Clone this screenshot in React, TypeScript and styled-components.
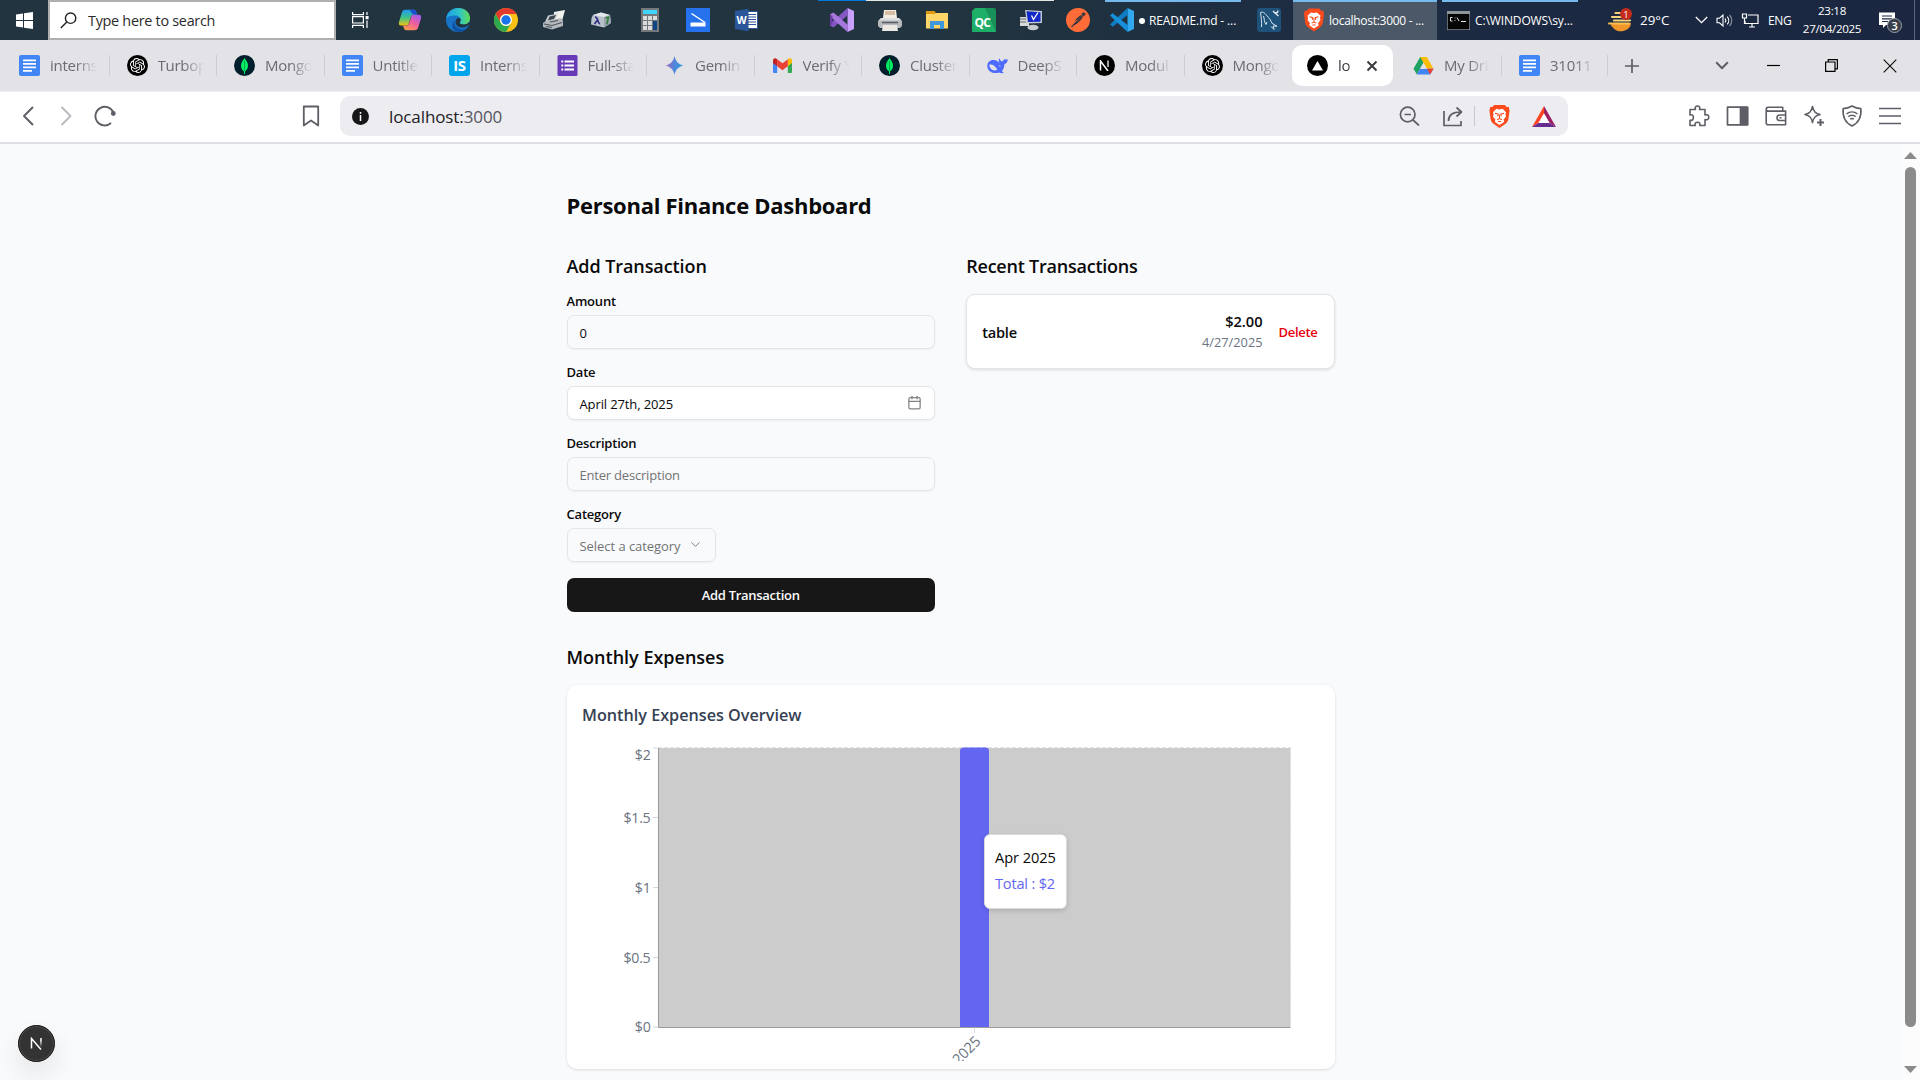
import React from "react";
import styled, { createGlobalStyle } from "styled-components";
import { SiOpenai, SiPostman } from "react-icons/si";
import { Calendar, ChevronDown } from "lucide-react";

const Global = createGlobalStyle`
  *, *::before, *::after { box-sizing: border-box; }
  html, body { margin: 0; padding: 0; }
  body { font-family: "Open Sans", "Noto Sans", sans-serif; background: #f9fafc; overflow: hidden; }
  svg { display: block; flex: none; }
`;

const Screen = styled.div`
  width: 1920px;
  height: 1080px;
  display: flex;
  flex-direction: column;
  overflow: hidden;
`;

/* ---------- Windows taskbar ---------- */

const Taskbar = styled.div`
  height: 40px;
  flex: none;
  display: flex;
  background: linear-gradient(90deg, #21343f 0%, #21343f 50%, #1c2a42 72%, #1b2741 100%);
  color: #fff;
  font-size: 12px;
`;
const StartButton = styled.div`
  width: 48px;
  display: flex;
  align-items: center;
  justify-content: center;
`;
const SearchBox = styled.div`
  width: 288px;
  display: flex;
  align-items: center;
  gap: 11px;
  padding-left: 10px;
  background: #fff;
  border: 2px solid #b0b0b0;
  color: #2b2b2b;
  font-size: 14.4px;
  letter-spacing: -0.28px;
`;
const PinnedApp = styled.div<{ $w?: number; $line?: string }>`
  width: ${(p) => p.$w ?? 48}px;
  display: flex;
  align-items: center;
  justify-content: center;
  background: ${(p) => (p.$line ? `linear-gradient(${p.$line}, ${p.$line}) top / 100% 1px no-repeat` : "none")};
`;
const RunningApp = styled(PinnedApp)`
  padding-left: 4px;
`;
const WindowButton = styled.div<{ $active?: boolean; $w: number; $gap: number; $spacing: number }>`
  width: ${(p) => p.$w}px;
  margin-left: ${(p) => p.$gap}px;
  padding: 0 0 2px ${(p) => (p.$active ? 11 : 5)}px;
  display: flex;
  align-items: center;
  gap: 5px;
  border-top: 2px solid #76b9ed;
  background: ${(p) => (p.$active ? "#4b5867" : "transparent")};
  letter-spacing: ${(p) => p.$spacing}px;
  white-space: nowrap;
`;
const Dot = styled.span`
  display: inline-block;
  width: 6px;
  height: 6px;
  margin-right: 4px;
  vertical-align: 1px;
  border-radius: 50%;
  background: #fff;
`;
const Tray = styled.div`
  flex: 1;
  display: flex;
  align-items: center;
  padding-left: 30px;
`;
const Temperature = styled.span`
  width: 55px;
  margin-left: 8px;
  font-size: 13.4px;
`;
const TrayIcons = styled.div`
  display: flex;
  align-items: center;
  gap: 8px;
`;
const Language = styled.span`
  width: 31px;
  margin-left: 9px;
  letter-spacing: -0.3px;
`;
const Clock = styled.div`
  width: 66px;
  display: flex;
  flex-direction: column;
  text-align: center;
  font-size: 11.6px;
  line-height: 18px;
  letter-spacing: -0.32px;
`;
const Notifications = styled.div`
  width: 36px;
  height: 40px;
  margin-left: 14px;
  border-right: 1px solid #5a6577;
  display: flex;
  align-items: center;
`;

/* ---------- Browser chrome ---------- */

const TabStrip = styled.div`
  height: 51px;
  flex: none;
  display: flex;
  align-items: center;
  padding-left: 2px;
  background: #e3e2e7;
`;
const Tab = styled.div<{ $last?: boolean; $w?: number }>`
  width: ${(p) => p.$w ?? 107.5}px;
  height: 21px;
  padding: 0 12px 0 17px;
  display: flex;
  align-items: center;
  gap: 10px;
  border-right: 1px solid ${(p) => (p.$last ? "transparent" : "#cdccd2")};
  > svg { width: 21px; }
`;
const TabLabel = styled.span<{ $active?: boolean }>`
  flex: 1;
  min-width: 0;
  overflow: hidden;
  white-space: nowrap;
  font-size: 15px;
  letter-spacing: -0.25px;
  line-height: 22px;
  padding-bottom: 2px;
  color: ${(p) => (p.$active ? "#3a3a40" : "#6c6b72")};
  mask-image: linear-gradient(90deg, #000 55%, transparent 100%);
`;
const ActiveTab = styled.div`
  width: 101px;
  height: 41px;
  margin-right: 3px;
  padding: 0 15px;
  display: flex;
  align-items: center;
  gap: 10px;
  border-radius: 10px;
  background: #fff;
`;
const NewTab = styled.div`
  display: flex;
  align-items: center;
  gap: 76px;
  padding: 0 38px 0 17px;
`;
const WindowControls = styled.div`
  display: flex;
  align-items: center;
  gap: 45px;
`;
const Toolbar = styled.div`
  height: 53px;
  flex: none;
  display: flex;
  align-items: center;
  padding: 0 0 2px 20px;
  background: #fff;
  border-top: 1px solid #f0eff3;
  border-bottom: 2px solid #dfdee4;
`;
const NavButtons = styled.div`
  width: 282px;
  display: flex;
  align-items: center;
  gap: 21px;
`;
const AddressBar = styled.div`
  width: 1228px;
  height: 40px;
  margin-left: 20px;
  padding: 0 12px;
  display: flex;
  align-items: center;
  border-radius: 10px;
  background: #edecf1;
`;
const Url = styled.span`
  flex: 1;
  margin-left: 20px;
  font-size: 17px;
  letter-spacing: -0.1px;
  color: #222226;
`;
const Port = styled.span`
  color: #55555c;
`;
const Divider = styled.span`
  width: 1px;
  height: 20px;
  margin: 0 14px 0 11px;
  background: #c8c7cd;
`;
const AddressIcons = styled.div`
  display: flex;
  align-items: center;
`;
const Share = styled.span`
  margin-left: 23px;
`;
const Shield = styled.span`
  margin-right: 22px;
`;
const Extensions = styled.div`
  margin-left: 120px;
  display: flex;
  align-items: center;
  gap: 16px;
`;

/* ---------- Page ---------- */

const Viewport = styled.div`
  flex: 1;
  display: flex;
  background: #f9fafc;
`;
const PageArea = styled.div`
  flex: 1;
  display: flex;
  justify-content: center;
  position: relative;
`;
const Scrollbar = styled.div`
  width: 19px;
  padding-top: 8px;
  display: flex;
  flex-direction: column;
  align-items: center;
  background: #fcfcfc;
`;
const Thumb = styled.div`
  width: 11px;
  height: 860px;
  margin: 8px 0 39px;
  border-radius: 6px;
  background: #8b8b8b;
`;
const Main = styled.main`
  width: 768px;
  padding-top: 45px;
  color: #0a0a0a;
`;
const Title = styled.h1`
  margin: 0 0 31px;
  font-size: 22px;
  line-height: 32px;
  font-weight: 700;
  letter-spacing: -0.28px;
`;
const Columns = styled.div`
  display: grid;
  grid-template-columns: 1fr 1fr;
  gap: 31.5px;
  margin-bottom: 31px;
`;
const Heading = styled.h2<{ $spacing?: number }>`
  margin: 0 0 14px;
  font-size: 18px;
  line-height: 28px;
  font-weight: 600;
  letter-spacing: ${(p) => p.$spacing ?? -0.08}px;
`;
const Form = styled.div`
  display: flex;
  flex-direction: column;
  gap: 16px;
`;
const Field = styled.div`
  display: flex;
  flex-direction: column;
  gap: 7px;
`;
const Label = styled.label`
  font-size: 13px;
  line-height: 14px;
  font-weight: 600;
  letter-spacing: -0.2px;
`;
const Control = styled.div<{ $solid?: boolean; $muted?: boolean; $w?: string; $spacing?: number }>`
  width: ${(p) => p.$w ?? "100%"};
  height: 34px;
  padding: 1px 12px 0 12px;
  display: flex;
  align-items: center;
  justify-content: space-between;
  border: 1px solid #e4e5e7;
  border-radius: 7px;
  background: ${(p) => (p.$solid ? "#fff" : "transparent")};
  box-shadow: 0 1px 2px rgba(0, 0, 0, 0.05);
  color: ${(p) => (p.$muted ? "#737373" : "#0a0a0a")};
  font-size: 13px;
  letter-spacing: ${(p) => p.$spacing ?? -0.2}px;
  svg { opacity: 0.5; color: #0a0a0a; margin-top: -2px; }
`;
const Submit = styled.button`
  height: 34px;
  padding: 0 0 1px;
  border: 0;
  border-radius: 7px;
  background: #171717;
  color: #fafafa;
  font: 600 13px/32px "Open Sans", sans-serif;
  letter-spacing: -0.28px;
`;
const Transaction = styled.div`
  height: 75px;
  padding: 0 16px 0 15px;
  display: flex;
  align-items: center;
  gap: 16px;
  border: 1px solid #e4e5e7;
  border-radius: 9px;
  background: #fff;
  box-shadow: 0 1px 3px rgba(0, 0, 0, 0.12);
`;
const TransactionName = styled.div`
  flex: 1;
  font-size: 14.6px;
  font-weight: 600;
  letter-spacing: -0.25px;
`;
const Amounts = styled.div`
  text-align: right;
  line-height: 20px;
`;
const Amount = styled.div`
  font-size: 14.6px;
  font-weight: 600;
`;
const DateText = styled.div`
  padding-top: 1px;
  font-size: 12.8px;
  color: #6b7280;
`;
const Delete = styled.div`
  font-size: 13px;
  font-weight: 600;
  letter-spacing: -0.3px;
  color: #e7000b;
`;
const ChartCard = styled.div`
  height: 384px;
  padding: 18px 15.5px 0;
  border-radius: 10px;
  background: #fff;
  box-shadow: 0 1px 3px rgba(0, 0, 0, 0.12);
`;
const ChartTitle = styled.h3`
  margin: 0 0 16px;
  font-size: 16.2px;
  line-height: 24px;
  font-weight: 600;
  color: #364153;
`;
const ChartArea = styled.div`
  position: relative;
`;
const Tooltip = styled.div`
  position: absolute;
  left: 402px;
  top: 91px;
  width: 83px;
  height: 75px;
  padding: 9px 0 0 10px;
  border: 1px solid #d9dadd;
  border-radius: 6px;
  background: #fff;
  box-shadow: 0 2px 5px rgba(0, 0, 0, 0.14);
  font-size: 14.6px;
  line-height: 26px;
  letter-spacing: -0.05px;
  white-space: nowrap;
`;
const TooltipValue = styled.div`
  color: #6366f1;
  letter-spacing: -0.2px;
`;
const DevBadge = styled.div`
  position: absolute;
  left: 18px;
  bottom: 18px;
  width: 37px;
  height: 37px;
  display: flex;
  align-items: center;
  justify-content: center;
  border-radius: 50%;
  background: #333;
  border: 1px solid #111;
  box-shadow: inset 0 0 0 1px #4c4c4c, 0 12px 26px rgba(0, 0, 0, 0.09);
`;

/* ---------- Icons ---------- */

const WindowsLogo = () => (
  <svg width="17" height="17" viewBox="0 0 17 17" fill="#fff">
    <path d="M0 2.4 7 1.4V8H0zM8 1.3 17 0v8H8zM0 9h7v6.6l-7-1zM8 9h9v8l-9-1.3z" />
  </svg>
);
const SearchGlyph = () => (
  <svg width="17" height="17" viewBox="0 0 17 17" fill="none" stroke="#222" strokeWidth="1.4">
    <circle cx="10.6" cy="6.2" r="5.2" />
    <path d="M6.8 10 .8 16" />
  </svg>
);
const TaskView = () => (
  <svg width="17" height="16" viewBox="0 0 17 16" fill="none" stroke="#fff" strokeWidth="1.2">
    <path d="M.6 0v2.6h10.8V0M.6 16v-2.6h10.8V16M.6 4.6h10.8v6.4H.6zM15 0v3M15 8.5V16" />
    <path d="M13.6 4h3v3.2h-3z" fill="#fff" stroke="none" />
  </svg>
);
const Copilot = () => (
  <svg width="24" height="24" viewBox="0 0 24 24">
    <defs>
      <linearGradient id="cpA" x1="0" y1="0" x2="0" y2="1">
        <stop offset="0" stopColor="#1f9bf0" />
        <stop offset=".5" stopColor="#3fc486" />
        <stop offset="1" stopColor="#f0c312" />
      </linearGradient>
      <linearGradient id="cpB" x1=".8" y1="0" x2=".2" y2="1">
        <stop offset="0" stopColor="#a45bf0" />
        <stop offset=".5" stopColor="#f0609c" />
        <stop offset="1" stopColor="#fb9a4c" />
      </linearGradient>
    </defs>
    <path d="M7.5 1.8h8.2c1.6 0 2.2 1 2.7 2.6l.7 2.4h-3.4c-1.8 0-2.5.9-3 2.4l-2 6.2c-.4 1.4-1.2 2.2-2.7 2.2H3.4C.9 17.6.6 15.6 1 14L3.8 4.8c.6-2 1.5-3 3.7-3z" fill="url(#cpA)" />
    <path d="M11.5 1.8h4.2c1.6 0 2.2 1 2.7 2.6l.7 2.4h-4z" fill="#1c4fd0" />
    <path d="M16.5 22.2H8.3c-1.6 0-2.2-1-2.7-2.6l-.5-2h3.2c1.7 0 2.3-.9 2.8-2.4l2-6.2c.4-1.4 1.2-2.2 2.7-2.2h4.8c2.5 0 2.8 2 2.4 3.6l-2.8 9.2c-.6 2-1.500 2.6-3.7 2.6z" fill="url(#cpB)" />
  </svg>
);
const Edge = () => (
  <svg width="24" height="24" viewBox="0 0 24 24">
    <defs>
      <linearGradient id="edA" x1="0" y1=".4" x2="1" y2=".4">
        <stop offset="0" stopColor="#1d9fe8" />
        <stop offset=".55" stopColor="#2fc3c9" />
        <stop offset="1" stopColor="#62dc55" />
      </linearGradient>
    </defs>
    <circle cx="12" cy="12" r="12" fill="#1673c8" />
    <path d="M.1 11C.8 4.5 6 0 12.3 0 19.2 0 24 4.8 24 10.2c0 4.2-2.8 6.3-6.2 6.3-3.2 0-4.4-1.1-4.1-2 .3-.8 1-1.2 1-2.6 0-2.4-2.4-4.4-5.6-4.4C5 7.5 1 8.5.1 11z" fill="url(#edA)" />
    <path d="M8.2 12.5c-1 5.5 3.5 9 8 9 2.2 0 4-.5 5.8-2C20 22.5 16 24 12.5 24 7.5 23.5 4 18.5 8.2 12.5z" fill="#0f4f9e" />
    <path d="M14.7 11.9c0 1.4-.8 1.8-1 2.6-.3.9.9 2 4.1 2 2.4 0 4.3-1 5.3-2.5.7 0 .9.4.6 1.2-1.1 2.6-4 4.3-7.2 4.3-4 0-7-2.5-7-5.6 0-2 1.3-3.3 2.8-3.9 1.5-.4 2.4.6 2.4 1.900z" fill="#21343f" />
  </svg>
);
const Chrome = () => (
  <svg width="24" height="24" viewBox="0 0 24 24">
    <circle cx="12" cy="12" r="12" fill="#fbc116" />
    <path d="M1.6 6A12 12 0 0 1 22.4 6H12a6 6 0 0 0-5.2 9z" fill="#e33b2e" />
    <path d="M1.6 6A12 12 0 0 0 12 24l5.2-9A6 6 0 0 1 6.8 15z" fill="#2da94f" />
    <circle cx="12" cy="12" r="6" fill="#fff" />
    <circle cx="12" cy="12" r="4.7" fill="#1a73e8" />
  </svg>
);
const FlatScanner = () => (
  <svg width="24" height="22" viewBox="0 0 24 22">
    <path d="M12 3 23 1l-3 11-8 1z" fill="#f1f1ee" />
    <path d="M6 6.5 16 4.5l-3 6L3 13z" fill="#c8cccf" />
    <path d="M7.5 7.5 14 6l-2 4-6 1.5z" fill="#3e474e" />
    <path d="M1 14 4 12l15-3 2 3v5L10 20.5 1 18z" fill="#b4b9bd" />
    <path d="m2 15 8 1.5 10-3M8 13l8-1.5M4 17.5l6 1" stroke="#4c545a" strokeWidth="1.2" fill="none" />
  </svg>
);
const LambdaCube = () => (
  <svg width="22" height="20" viewBox="0 0 22 20">
    <path d="M3 5 11 2.500l9 2.500 1 8-7 4.500L1 14.500 1.500 8z" fill="#b9c1ca" />
    <path d="M3 5 11 2.500l9 2.500-6 2z" fill="#e3e8ec" />
    <path d="m14 7 6-2 1 8-7 4.500z" fill="#98a3ac" />
    <path d="M5 7c1.800 0 2.300 1.600 2.800 3.200s.9 3.800 2.400 3.500M7.500 10l-3 4" stroke="#2b2a7c" strokeWidth="1.600" fill="none" />
    <path d="m15.500 8 3-.8-1.700 7" stroke="#2e7d3a" strokeWidth="1.500" fill="none" />
  </svg>
);
const Calculator = () => (
  <svg width="18" height="24" viewBox="0 0 18 24">
    <path d="M0 0h18v24H0z" fill="#76797c" />
    <path d="M2 2h14v4H2z" fill="#3fd4fb" />
    <path d="M2 8h4v4H2zM7 8h4v4H7zM12 8h4v4h-4zM2 13h4v4H2zM7 13h4v4H7zM2 18h4v4H2zM7 18h4v4H7z" fill="#d9dbdd" />
    <path d="M12 13h4v9h-4z" fill="#0d4683" />
  </svg>
);
const ScanApp = () => (
  <svg width="24" height="24" viewBox="0 0 24 24">
    <path d="M0 0h24v24H0z" fill="#2672ec" />
    <path d="M4.5 14.500h15v4h-15z" fill="#fff" />
    <path d="M5.5 5.500 19 14.500" stroke="#fff" strokeWidth="1.500" />
  </svg>
);
const Word = () => (
  <svg width="23" height="24" viewBox="0 0 23 24">
    <path d="M12 3.5h10.5v17H12z" fill="#fff" stroke="#2b579a" />
    <path d="M13 6.5h8M13 9h8M13 11.5h8M13 14h8M13 16.5h8" stroke="#2b579a" strokeWidth="1.1" />
    <path d="M0 3 13.5.8v22.4L0 21z" fill="#2b579a" />
    <text x="1.6" y="16" fontSize="10.5" fontWeight="700" fill="#fff" fontFamily="Open Sans">W</text>
  </svg>
);
const VisualStudio = () => (
  <svg width="24" height="24" viewBox="0 0 24 24">
    <path d="M17.5 0 24 3v18l-6.5 3z" fill="#c9a0fb" />
    <path d="M17.5 0 18 7 3.5 19.5 0 17.5v-1.8z" fill="#8457c4" />
    <path d="M17.5 24 18 17 3.5 4.5 0 6.5v1.8z" fill="#a678de" />
    <path d="M0 6.5 2.4 8v8L0 17.5z" fill="#6b3fa8" />
  </svg>
);
const Printer = () => (
  <svg width="24" height="22" viewBox="0 0 24 22">
    <path d="M6 1h12l1 8H5z" fill="#f4ede2" />
    <path d="M7 3h10M7 5h10" stroke="#b98d66" strokeWidth="1.2" />
    <path d="M3 9h18l3 3v5l-2 2H2l-2-2v-5z" fill="#b7babd" />
    <path d="M3 9h18l2 2.5H1z" fill="#dcdee0" />
    <path d="M4 13.5h16" stroke="#5b6064" strokeWidth="1.6" />
    <path d="M5 16h14l1 6H4z" fill="#ece9e4" />
  </svg>
);
const Explorer = () => (
  <svg width="22" height="18" viewBox="0 0 22 18">
    <path d="M0 2h22v15.5H0z" fill="#ffd667" />
    <path d="M0 0h8.500l1.500 2-1 1H0z" fill="#dd9a12" />
    <path d="M4 10h14v8h-4v-4H8v4H4z" fill="#3f97dd" />
  </svg>
);
const QuickCpu = () => (
  <svg width="24" height="24" viewBox="0 0 24 24">
    <path d="M3 0h18l3 3v21H0V3z" fill="#1fae68" />
    <path d="M13 0h11v24z" fill="#168653" opacity=".7" />
    <text x="2.5" y="18.5" fontSize="12" fontWeight="700" fill="#fff" fontFamily="Open Sans" letterSpacing="-.8">QC</text>
  </svg>
);
const RemoteDesktop = () => (
  <svg width="24" height="22" viewBox="0 0 24 22">
    <path d="M1 8h9v9H1z" fill="#d7dadd" />
    <path d="M6 1 23 2v12L8 14.500z" fill="#c3c9ce" />
    <path d="m7.500 2.300 14 .9v9.600L9 13z" fill="#1328c8" />
    <path d="m12.500 6.500 2 4L19 3.500" stroke="#fff" strokeWidth="1.300" fill="none" />
    <ellipse cx="14" cy="18.5" rx="5.5" ry="2.8" fill="#c8ccd0" />
    <path d="M1 10h6M1 13h6" stroke="#666" />
  </svg>
);
const PostmanDisc = () => <SiPostman size={24} color="#ff6c37" />;
const VsCode = () => (
  <svg width="24" height="24" viewBox="0 0 24 24">
    <path d="M17.5 0 24 3v18l-6.5 3z" fill="#32a9ef" />
    <path d="M17.5 0 18 6.8 2.6 18.8 0 16.6z" fill="#0f7cc4" />
    <path d="M17.5 24 18 17.2 2.6 5.2 0 7.4z" fill="#1690db" />
  </svg>
);
const MySql = () => (
  <svg width="24" height="24" viewBox="0 0 24 24">
    <rect width="24" height="24" rx="3" fill="#1f527a" />
    <path d="M4.500 19C5 15 4 8 3.500 4.500c2-1.200 4 .2 6 2.800 3 3 4.500 5.500 5.500 8l5 3-3.800-.3.8 3.500-3-3M6.500 8c1 3 .5 6 2.500 8.500l1-2.500" fill="none" stroke="#d8e6ee" strokeWidth="1" />
    <path d="m16 3 2 2 3.500 3M18 5l2.500-.5.500-2" stroke="#e8eef2" strokeWidth="1.300" fill="none" />
  </svg>
);
const Lion = ({ w = 21, h = 24 }: { w?: number; h?: number }) => (
  <svg width={w} height={h} viewBox="0 0 21 24">
    <path d="M5 0h11l2 2.2 2.200-.2L21 6l-1.200 8.500c-.6 3-2.300 4.600-4.500 6.200L10.500 24l-4.800-3.300c-2.200-1.600-3.900-3.200-4.500-6.200L0 6l.8-4 2.200.2z" fill="#fb4a1c" />
    <path d="m10.500 4.600 3.200-.6 3.600 3.500-.6 2.300.6 2.200-2.600 3.400.8 2-5 3.400-5-3.400.8-2L3.700 12l.6-2.200-.6-2.300L7.300 4z" fill="#fff" />
    <path d="m5.800 8.600 3.400 1-.6 2.200M15.200 8.600l-3.400 1 .6 2.200M10.500 10v4.200M8 15.300l2.500-1.200 2.500 1.200M8.800 17.200h3.400" stroke="#fb4a1c" strokeWidth="1.100" fill="none" />
  </svg>
);
const Cmd = () => (
  <svg width="23" height="19" viewBox="0 0 23 19">
    <path d="M0 0h23v19H0z" fill="#8f9499" />
    <path d="M.7 3h21.600v15.300H.7z" fill="#050505" />
    <path d="M5.500 6.500h-2V10h2M8 6.500v.8M8 9.200v.8M10 6.500l2 3.500M14 10.500h5" stroke="#e6e6e6" strokeWidth="1" fill="none" />
  </svg>
);
const Weather = () => (
  <svg width="24" height="24" viewBox="0 0 24 24">
    <path d="M7.5 5h8M4 9h12M6 12.500h16" stroke="#f7d27c" strokeWidth="2.200" strokeLinecap="round" />
    <path d="M2 15h21a10 8.500 0 0 1-19 3.500c-1.500 0-1.500-1.500 0-1.500z" fill="#f0962a" />
    <path d="M1 15.500h20" stroke="#fbc04e" strokeWidth="2" strokeLinecap="round" />
    <circle cx="18" cy="6" r="6" fill="#c42b1c" />
    <text x="18" y="9.500" textAnchor="middle" fontSize="9.500" fill="#fff" fontFamily="Open Sans">1</text>
  </svg>
);
const TrayChevron = () => (
  <svg width="13" height="8" viewBox="0 0 13 8" fill="none" stroke="#fff" strokeWidth="1.3"><path d="m.8 1 5.700 5.700L12.200 1" /></svg>
);
const Speaker = () => (
  <svg width="17" height="15" viewBox="0 0 17 15" fill="none" stroke="#fff" strokeWidth="1.1">
    <path d="M1 5.200h2.500L7 2v11L3.500 9.800H1zM9 5.500c1 1.200 1 2.800 0 4M11.200 3.700c2 2.200 2 5.400 0 7.600" />
    <path d="M13.500 2c3 3.200 3 7.800 0 11" opacity=".5" />
  </svg>
);
const Network = () => (
  <svg width="18" height="15" viewBox="0 0 18 15" fill="none" stroke="#fff" strokeWidth="1.2">
    <path d="M7 2h10v8.500H4V8M8 14h6M11 10.500V14M1.500 1h4v4h-4zM3.500 5v6" />
  </svg>
);
const Notification = () => (
  <svg width="24" height="26" viewBox="0 0 24 26">
    <path d="M0 5.500h16V18H7l-3 3v-3H0z" fill="#fff" />
    <path d="M3 9h10M3 11.800h10M3 14.500h6" stroke="#1b2741" strokeWidth="1.200" />
    <circle cx="15.500" cy="18.500" r="7" fill="#363d49" stroke="#9aa1ab" strokeWidth="1" />
    <text x="15.500" y="22.500" textAnchor="middle" fontSize="11.500" fontWeight="600" fill="#fff" fontFamily="Open Sans">3</text>
  </svg>
);

const Docs = () => (
  <svg width="21" height="21" viewBox="0 0 21 21">
    <rect width="21" height="21" rx="2" fill="#4285f4" />
    <path d="M4 5.3h13M4 8.8h13M4 12.3h13M4 15.8h9" stroke="#fff" strokeWidth="1.8" />
  </svg>
);
const Disc = styled.span<{ $bg: string }>`
  width: 21px;
  height: 21px;
  flex: none;
  display: flex;
  align-items: center;
  justify-content: center;
  border-radius: 50%;
  background: ${(p) => p.$bg};
`;
const Gpt = () => <Disc $bg="#000"><SiOpenai size={15} color="#fff" /></Disc>;
const Mongo = () => (
  <Disc $bg="#001e2b">
    <svg width="7" height="16" viewBox="0 0 7 16">
      <path d="M3.500 0C4.500 2 7 4 7 8c0 3-2 4.500-3 5.500V16H3v-2.500C2 12.500 0 11 0 8c0-4 2.500-6 3.500-8z" fill="#00ed64" />
      <path d="M3.500 3v10" stroke="#008c43" strokeWidth=".7" />
    </svg>
  </Disc>
);
const Internshala = () => (
  <svg width="21" height="21" viewBox="0 0 21 21">
    <rect width="21" height="21" rx="3" fill="#00a5ec" />
    <text x="10.5" y="16" textAnchor="middle" fontSize="15" fontWeight="700" fill="#fff" fontFamily="Open Sans" letterSpacing="-.3">IS</text>
  </svg>
);
const Forms = () => (
  <svg width="20" height="21" viewBox="0 0 20 21">
    <rect width="20" height="21" rx="1.5" fill="#673ab7" />
    <path d="M7 6.5h9.5M7 10.5h9.5M7 14.5h9.5M3.8 6.5h1.9M3.8 10.5h1.9M3.8 14.5h1.9" stroke="#fff" strokeWidth="1.9" />
  </svg>
);
const Gemini = () => (
  <svg width="19" height="21" viewBox="0 0 19 21">
    <defs>
      <linearGradient id="gem" x1="0" y1="0" x2="1" y2=".2">
        <stop offset=".1" stopColor="#a06ab8" />
        <stop offset=".5" stopColor="#5a80d8" />
        <stop offset="1" stopColor="#2a9fe0" />
      </linearGradient>
    </defs>
    <path d="M9.5.8C10.2 6 13.500 9.500 18.500 10.500 13.500 11.500 10.200 15 9.500 20.200 8.800 15 5.500 11.500.5 10.500 5.500 9.500 8.800 6 9.500.8z" fill="url(#gem)" />
  </svg>
);
const Gmail = () => (
  <svg width="19" height="15" viewBox="0 0 19 15">
    <path d="M0 3h4.200v12H1.300C.5 15 0 14.500 0 13.700z" fill="#4285f4" />
    <path d="M14.800 3H19v10.700c0 .8-.5 1.300-1.300 1.300h-2.900z" fill="#34a853" />
    <path d="M14.800 1.200C16.500-.5 19 .3 19 2.600V5l-4.200 3.200z" fill="#fbbc04" />
    <path d="M4.200 1.200C2.500-.5 0 .3 0 2.600V5l4.200 3.200z" fill="#c5221f" />
    <path d="m4.200 1.200 5.300 4 5.300-4v7l-5.300 4-5.300-4z" fill="#ea4335" />
  </svg>
);
const DeepSeek = () => (
  <svg width="21" height="16" viewBox="0 0 21 16">
    <path d="M12.3.2c.8 1.600 1.500 2.600 2.400 3.200C16 3 17 2.200 17.200 1c1.200 1 2.400.6 3.500 0 0 3-1.200 4.600-3.200 5-.2 3.400-1.200 5.600-2.700 7.200l2 1.500c-1.600.8-3.400.4-4.400-.2C6.500 16.500 0 13.500.3 7.500.6 3.500 4 1 8.500 2.300 10 2.600 11.400 3.800 12.600 5.200 11.500 3.500 11.500 1.500 12.300.2z" fill="#4d6bfe" />
    <path d="M2.200 6.800c3-.8 5.800 1 8 4.800-3 2.400-7.600-.2-8-4.800zM11.500 8c.8-.8 2-.6 2.400.6" fill="#e3e2e7" />
  </svg>
);
const NextTab = () => (
  <Disc $bg="#000">
    <svg width="11" height="11" viewBox="0 0 11 11" fill="none" stroke="#fff" strokeWidth="1.5">
      <path d="M1.500 10.500V1L9 11" />
      <path d="M9 .5V7" opacity=".85" />
    </svg>
  </Disc>
);
const Vercel = () => (
  <Disc $bg="#000">
    <svg width="11" height="10" viewBox="0 0 11 10"><path d="M5.500 0 11 9.500H0z" fill="#fff" /></svg>
  </Disc>
);
const Drive = () => (
  <svg width="20" height="18" viewBox="0 0 20 18">
    <path d="M6.700 0h6.600L6.600 11.700 3.400 17.500 0 11.700z" fill="#1ea362" />
    <path d="M6.700 0h6.600L20 11.700h-6.600z" fill="#fbbc04" />
    <path d="M6.600 11.700H20l-3.400 5.800H3.300z" fill="#4285f4" />
    <path d="M13.400 11.700H20l-3.400 5.800z" fill="#ea4335" />
    <path d="m10 5.700 3.400 6H6.600z" fill="#e3e2e7" />
  </svg>
);

type LineProps = { w: number; h: number; d: string; color?: string; sw?: number; children?: React.ReactNode };
const Line = ({ w, h, d, color = "#5f5e66", sw = 1.6, children }: LineProps) => (
  <svg width={w} height={h} viewBox={`0 0 ${w} ${h}`} fill="none" stroke={color} strokeWidth={sw} strokeLinejoin="round">
    <path d={d} />
    {children}
  </svg>
);
const Bat = () => (
  <svg width="24" height="21" viewBox="0 0 24 21">
    <path d="M12 0 0 21l6.500-4L12 7.500z" fill="#ff4724" />
    <path d="M12 0v7.500l5.500 9.500 6.500 4z" fill="#9e1f63" />
    <path d="M0 21h24l-6.500-4h-11z" fill="#662d91" />
    <path d="m12 7.500 5.500 9.500h-11z" fill="#fff" />
  </svg>
);

/* ---------- Data ---------- */

type TabData = { icon: React.FC; label: string };
const tabs: TabData[] = [
  { icon: Docs, label: "interns" },
  { icon: Gpt, label: "Turbop" },
  { icon: Mongo, label: "Mongo" },
  { icon: Docs, label: "Untitle" },
  { icon: Internshala, label: "Interns" },
  { icon: Forms, label: "Full-sta" },
  { icon: Gemini, label: "Gemin" },
  { icon: Gmail, label: "Verify Y" },
  { icon: Mongo, label: "Cluster" },
  { icon: DeepSeek, label: "DeepS" },
  { icon: NextTab, label: "Modul" },
  { icon: Gpt, label: "Mongo" },
];
const tabsAfter: TabData[] = [
  { icon: Drive, label: "My Dri" },
  { icon: Docs, label: "310111" },
];
const pinned: { icon?: React.FC; w?: number; line?: string }[] = [
  { icon: TaskView },
  { icon: Copilot, w: 52 },
  { icon: Edge, w: 44 },
  { icon: Chrome, w: 52 },
  { icon: FlatScanner, w: 44 },
  { icon: LambdaCube, w: 50 },
  { icon: Calculator },
  { icon: ScanApp },
  { icon: Word },
  {},
  { icon: VisualStudio, line: "#0078d7" },
  { icon: Printer, w: 47, line: "#e4e6e2" },
  { icon: Explorer, w: 47, line: "#e4e6e2" },
  { icon: QuickCpu, w: 47, line: "#e4e6e2" },
  { icon: RemoteDesktop, w: 47, line: "#e4e6e2" },
  { icon: PostmanDisc, w: 47 },
];
const ticks: [string, number, number][] = [
  ["$2", 748, 760],
  ["$1.5", 817.5, 823],
  ["$1", 887.5, 893],
  ["$0.5", 957.5, 963],
  ["$0", 1027, 1032],
];

const TabItem = ({ icon: Icon, label, last, w }: TabData & { last?: boolean; w?: number }) => (
  <Tab $last={last} $w={w}>
    <Icon />
    <TabLabel>{label}</TabLabel>
  </Tab>
);

const Chart = () => (
  <svg width="737" height="317.5" viewBox="582 743 737 317.5">
    <path d="M658.5 748h632v279h-632z" fill="#ccc" />
    <path d="M658.5 747.5h632V1027" fill="none" stroke="#dcdcdc" strokeDasharray="3 3" />
    <path d="M658.5 748v279.500h632" fill="none" stroke="#9b9b9b" />
    {ticks.map(([label, y, base]) => (
      <g key={label}>
        <path d={`M653 ${y}h5`} stroke="#d5d7da" />
        <text x="650.5" y={base} textAnchor="end" fontSize="14.2" letterSpacing="-.25" fill="#6b7280">{label}</text>
      </g>
    ))}
    <path d="M960 1027V751a3.500 3.500 0 0 1 3.500-3.500h22a3.500 3.500 0 0 1 3.500 3.500v276z" fill="#6366f1" />
    <path d="M974.5 1027.500v5.500" stroke="#d5d7da" />
    <text transform="translate(981.500 1042.500) rotate(-45)" textAnchor="end" fontSize="14.600" letterSpacing="-.2" fill="#6b7280">2025</text>
  </svg>
);

export default function App() {
  return (
    <Screen>
      <Global />
      <Taskbar>
        <StartButton><WindowsLogo /></StartButton>
        <SearchBox><SearchGlyph />Type here to search</SearchBox>
        {pinned.map(({ icon: Icon, w, line }, i) => (
          <PinnedApp key={i} $w={w} $line={line}>{Icon && <Icon />}</PinnedApp>
        ))}
        <WindowButton $w={136} $gap={4} $spacing={-0.12}>
          <VsCode />
          <span><Dot />README.md - ...</span>
        </WindowButton>
        <RunningApp $w={52}><MySql /></RunningApp>
        <WindowButton $w={144} $gap={0} $spacing={-0.28} $active>
          <Lion w={20} h={24} />
          <span>localhost:3000 - ...</span>
        </WindowButton>
        <WindowButton $w={136} $gap={5} $spacing={-0.13}>
          <Cmd />
          <span>C:\WINDOWS\sy...</span>
        </WindowButton>
        <Tray>
          <Weather />
          <Temperature>29°C</Temperature>
          <TrayIcons><TrayChevron /><Speaker /><Network /></TrayIcons>
          <Language>ENG</Language>
          <Clock><span>23:18</span><span>27/04/2025</span></Clock>
          <Notifications><Notification /></Notifications>
        </Tray>
      </Taskbar>

      <TabStrip>
        {tabs.map((t, i) => (
          <TabItem key={i} {...t} last={i === tabs.length - 1} />
        ))}
        <ActiveTab>
          <Vercel />
          <TabLabel $active>lo</TabLabel>
          <Line w={12} h={12} d="m1.500 1.500 9 9m0-9-9 9" color="#3a3a40" sw={2} />
        </ActiveTab>
        {tabsAfter.map((t) => <TabItem key={t.label} {...t} w={106} />)}
        <NewTab>
          <Line w={14} h={14} d="M7 0v14M0 7h14" sw={1.7} />
          <Line w={14} h={9} d="m1.200 1.200 5.800 6 5.800-6" sw={2} />
        </NewTab>
        <WindowControls>
          <Line w={13} h={13} d="M0 6.500h13" color="#000" sw={1.2} />
          <Line w={13} h={13} d="M.6 3H10v9.400H.6zM3.200 3V.6h9.200v9.200H10" color="#000" sw={1.2} />
          <Line w={14} h={14} d="m.7.7 12.600 12.600m0-12.600L.7 13.300" color="#111" sw={1.2} />
        </WindowControls>
      </TabStrip>

      <Toolbar>
        <NavButtons>
          <Line w={15} h={20} d="m13 1-9 9 9 9" sw={1.9} />
          <Line w={17} h={20} d="m5.500 1 9 9-9 9" color="#bab9c0" sw={1.9} />
          <Line w={23} h={22} d="M17 18A9.300 9.300 0 1 1 19.500 8" sw={1.9}>
            <circle cx="19.300" cy="8.500" r="2.400" fill="#5f5e66" stroke="none" />
          </Line>
        </NavButtons>
        <Line w={18} h={22} d="M1.800 1.500h14.400v19L9 15.500l-7.200 5z" sw={1.8} />
        <AddressBar>
          <svg width="17" height="17" viewBox="0 0 17 17">
            <circle cx="8.5" cy="8.5" r="8.5" fill="#17171a" />
            <path d="M8.500 4v1.700M8.500 7v6" stroke="#fff" strokeWidth="1.5" />
          </svg>
          <Url>localhost:<Port>3000</Port></Url>
          <AddressIcons>
            <Line w={21} h={20} d="M16 8.500a7.300 7.300 0 1 1-14.600 0 7.300 7.300 0 0 1 14.600 0zM5.500 8.500H12M14 14l6 5.500" sw={1.7} />
            <Share>
              <Line w={20} h={21} d="M1 5v14.500h17V15M5.500 15c0-6 4-9 12.500-9M13.500 1.500l5 4.500-5 4.500" sw={1.7} />
            </Share>
            <Divider />
            <Shield><Lion w={21} h={23} /></Shield>
            <Bat />
          </AddressIcons>
        </AddressBar>
        <Extensions>
          <Line w={22} h={22} d="M2 4.500h5.500c-1-2 .3-3.500 2-3.500s3 1.500 2 3.500H17V10c2.200-.9 3.800.3 3.800 2.200S19.200 15.400 17 14.500v6h-5.200c.6-2-.6-3.300-2.300-3.300s-2.900 1.300-2.300 3.300H2v-5.300c2.200.7 3.400-.7 3.400-2.700S4.200 9.200 2 10z" />
          <Line w={23} h={20} d="M1.500 1.200h20v17.600h-20z" sw={1.7}>
            <path d="M14.500 1.500h7v17h-7z" fill="#5f5e66" />
          </Line>
          <Line w={22} h={20} d="M1.200 3.500c0-1.300.8-2.300 2-2.300h14.500v3.600M1.200 3.500c0 1 .8 1.600 2 1.600h17.400v13.700H3.200c-1.200 0-2-.7-2-2zM20.600 9h-6c-1.600 0-2.600 1.200-2.600 2.800s1 2.700 2.600 2.700h6M14.500 11.800h2" />
          <Line w={22} h={22} d="M9.500 1.500c1 5 2.800 7 7.500 8-4.700 1-6.500 3-7.500 8-1-5-2.800-7-7.500-8 4.700-1 6.500-3 7.500-8z">
            <path d="M17.500 14v7M14 17.500h7" strokeWidth="2" />
          </Line>
          <Line w={22} h={22} d="M11 1c3 1.800 5.800 2.500 8.800 2.600.8 7.400-1.600 13.800-8.800 17.400C3.800 17.400 1.400 11 2.200 3.600 5.200 3.500 8 2.800 11 1z">
            <path d="M5.500 9c3.300-2.700 7.700-2.700 11 0M7.300 11.700c2.300-1.800 5.100-1.800 7.400 0M9.200 14.200c1.200-.9 2.400-.9 3.600 0" />
          </Line>
          <Line w={22} h={18} d="M0 1.500h22M0 9h22M0 16.500h22" sw={1.7} />
        </Extensions>
      </Toolbar>

      <Viewport>
        <PageArea>
          <Main>
            <Title>Personal Finance Dashboard</Title>
            <Columns>
              <section>
                <Heading>Add Transaction</Heading>
                <Form>
                  <Field>
                    <Label>Amount</Label>
                    <Control>0</Control>
                  </Field>
                  <Field>
                    <Label>Date</Label>
                    <Control $solid $spacing={-0.12}>April 27th, 2025<Calendar size={15} strokeWidth={2} /></Control>
                  </Field>
                  <Field>
                    <Label>Description</Label>
                    <Control $muted>Enter description</Control>
                  </Field>
                  <Field>
                    <Label>Category</Label>
                    <Control $muted $w="149px" $spacing={-0.05}>Select a category<ChevronDown size={15} strokeWidth={1.6} /></Control>
                  </Field>
                  <Submit>Add Transaction</Submit>
                </Form>
              </section>
              <section>
                <Heading $spacing={-0.23}>Recent Transactions</Heading>
                <Transaction>
                  <TransactionName>table</TransactionName>
                  <Amounts>
                    <Amount>$2.00</Amount>
                    <DateText>4/27/2025</DateText>
                  </Amounts>
                  <Delete>Delete</Delete>
                </Transaction>
              </section>
            </Columns>
            <Heading $spacing={0}>Monthly Expenses</Heading>
            <ChartCard>
              <ChartTitle>Monthly Expenses Overview</ChartTitle>
              <ChartArea>
                <Chart />
                <Tooltip>
                  Apr 2025
                  <TooltipValue>Total : $2</TooltipValue>
                </Tooltip>
              </ChartArea>
            </ChartCard>
          </Main>
          <DevBadge>
            <svg width="13" height="13" viewBox="0 0 13 13" fill="none" stroke="#fff" strokeWidth="1.5">
              <defs>
                <linearGradient id="nfade" x1="0" y1="0" x2="0" y2="1">
                  <stop offset=".3" stopColor="#fff" />
                  <stop offset="1" stopColor="#fff" stopOpacity="0" />
                </linearGradient>
              </defs>
              <path d="M1.500 11.500v-10L11 12.500" />
              <path d="M10.200 1h1.500v9h-1.500z" fill="url(#nfade)" stroke="none" />
            </svg>
          </DevBadge>
        </PageArea>
        <Scrollbar>
          <svg width="13" height="7" viewBox="0 0 13 7"><path d="M6.500 0 13 7H0z" fill="#8b8b8b" /></svg>
          <Thumb />
          <svg width="13" height="7" viewBox="0 0 13 7"><path d="M0 0h13L6.500 7z" fill="#8b8b8b" /></svg>
        </Scrollbar>
      </Viewport>
    </Screen>
  );
}
